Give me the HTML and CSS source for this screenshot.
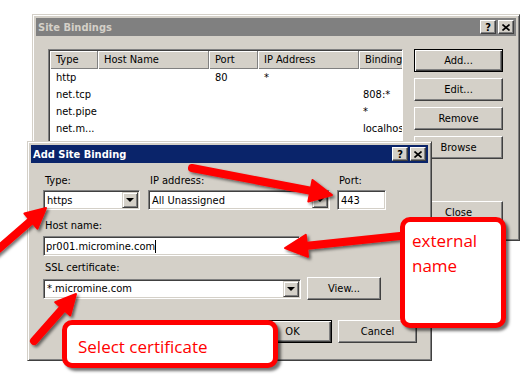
FILE: index.html
```html
<!DOCTYPE html>
<html lang="en">
<head>
    <meta charset="UTF-8">
    <link rel="stylesheet" href="styles.css">
</head>
<body>

<div class="desk">

    <!-- back window -->
    <div class="win win-sites">
        <div class="title title-off">
            <span>Site Bindings</span>
            <div class="caps">
                <span class="cap">?</span>
                <span class="cap"><svg width="8" height="7" viewBox="0 0 8 7"><path d="M0.5 0.5l7 6M7.5 0.5l-7 6" stroke="#000" stroke-width="1.6"/></svg></span>
            </div>
        </div>
        <div class="sites-body">
            <div class="list">
                <div class="lgrid">
                    <div class="hcell">Type</div>
                    <div class="hcell">Host Name</div>
                    <div class="hcell">Port</div>
                    <div class="hcell">IP Address</div>
                    <div class="hcell">Binding</div>

                    <div class="cell">http</div><div class="cell"></div><div class="cell">80</div><div class="cell">*</div><div class="cell cell-b"></div>
                    <div class="cell">net.tcp</div><div class="cell"></div><div class="cell"></div><div class="cell"></div><div class="cell cell-b">808:*</div>
                    <div class="cell">net.pipe</div><div class="cell"></div><div class="cell"></div><div class="cell"></div><div class="cell cell-b">*</div>
                    <div class="cell">net.m...</div><div class="cell"></div><div class="cell"></div><div class="cell"></div><div class="cell cell-b">localhost</div>
                    <div class="cell"></div><div class="cell"></div><div class="cell"></div><div class="cell"></div><div class="cell cell-b">localhost</div>
                </div>
            </div>
            <div class="side">
                <div class="btn btn-def">Add...</div>
                <div class="btn">Edit...</div>
                <div class="btn">Remove</div>
                <div class="btn">Browse</div>
                <div class="btn btn-close">Close</div>
            </div>
        </div>
    </div>

    <!-- front dialog -->
    <div class="win win-add">
        <div class="title">
            <span>Add Site Binding</span>
            <div class="caps">
                <span class="cap">?</span>
                <span class="cap"><svg width="8" height="7" viewBox="0 0 8 7"><path d="M0.5 0.5l7 6M7.5 0.5l-7 6" stroke="#000" stroke-width="1.6"/></svg></span>
            </div>
        </div>
        <div class="form">
            <div class="row1">
                <div class="grp grp-type">
                    <div class="lbl">Type:</div>
                    <div class="field combo"><span class="val">https</span><span class="drop"></span></div>
                </div>
                <div class="grp grp-ip">
                    <div class="lbl">IP address:</div>
                    <div class="field combo"><span class="val">All Unassigned</span><span class="drop"></span></div>
                </div>
                <div class="grp grp-port">
                    <div class="lbl">Port:</div>
                    <div class="field"><span class="val">443</span></div>
                </div>
            </div>

            <div class="lbl lbl-host">Host name:</div>
            <div class="field field-host"><span class="val">pr001.micromine.com</span><span class="caret"></span></div>

            <div class="lbl lbl-ssl">SSL certificate:</div>
            <div class="row-ssl">
                <div class="field combo field-ssl"><span class="val">*.micromine.com</span><span class="drop"></span></div>
                <div class="btn btn-view">View...</div>
            </div>

            <div class="row-ok">
                <div class="btn btn-def btn-ok">OK</div>
                <div class="btn btn-ok">Cancel</div>
            </div>
        </div>
    </div>

    <!-- annotation arrows -->
    <svg class="marks" width="531" height="379" viewBox="0 0 531 379">
        <defs>
            <filter id="sh" x="-20%" y="-20%" width="140%" height="140%">
                <feDropShadow dx="2" dy="2" stdDeviation="1.4" flood-color="#000" flood-opacity="0.55"/>
            </filter>
        </defs>
        <g fill="#f00" stroke="#f00" stroke-linecap="round" stroke-linejoin="round" filter="url(#sh)">
            <line x1="192" y1="168" x2="312" y2="191" stroke-width="8"/>
            <polygon points="332,195 308.3,201.6 312.5,180" stroke-width="2"/>

            <line x1="-5" y1="252" x2="33" y2="219" stroke-width="8"/>
            <polygon points="46,208 37.4,228.7 24.4,213.5" stroke-width="2"/>

            <line x1="400" y1="236" x2="305" y2="246" stroke-width="8"/>
            <polygon points="285,248 305.8,234.9 308,256.7" stroke-width="2"/>

            <line x1="34" y1="341" x2="64" y2="307" stroke-width="8"/>
            <polygon points="76,294 70.2,315.6 55.2,302.2" stroke-width="2"/>
        </g>
    </svg>

    <div class="note note-ext">external<br>name</div>
    <div class="note note-ssl">Select certificate</div>

</div>

</body>
</html>
```

FILE: styles.css
```css
body {
    margin: 0;
    background-color: #fff;
    font-family: "DejaVu Sans Condensed", "DejaVu Sans", sans-serif;
    font-size: 11px;
    color: #000;
}

.desk {
    position: relative;
    width: 531px;
    height: 379px;
    overflow: hidden;
}

/* classic window frame */
.win {
    position: absolute;
    box-sizing: border-box;
    display: flex;
    flex-direction: column;
    padding: 3px;
    background-color: #d4d0c8;
    border: 1px solid;
    border-color: #d4d0c8 #404040 #404040 #d4d0c8;
    box-shadow: inset 1px 1px #fff, inset -1px -1px #808080;
}

.win-sites {
    left: 32px;
    top: 14px;
    width: 488px;
    height: 227px;
}

.win-add {
    left: 27px;
    top: 141px;
    width: 405px;
    height: 220px;
}

.title {
    height: 18px;
    flex-shrink: 0;
    display: flex;
    align-items: center;
    justify-content: space-between;
    padding: 0 2px 0 2px;
    font-weight: bold;
    color: #fff;
    background-color: #0a246a;
}

.title-off {
    background-color: #808080;
    color: #d4d0c8;
}

.caps {
    display: flex;
    gap: 2px;
}

.cap {
    box-sizing: border-box;
    width: 16px;
    height: 14px;
    display: flex;
    align-items: center;
    justify-content: center;
    font-size: 11px;
    font-weight: bold;
    color: #000;
    background-color: #d4d0c8;
    border: 1px solid;
    border-color: #fff #404040 #404040 #fff;
    box-shadow: inset -1px -1px #808080;
}

/* buttons and fields */
.btn {
    box-sizing: border-box;
    height: 23px;
    display: flex;
    align-items: center;
    justify-content: center;
    background-color: #d4d0c8;
    border: 1px solid;
    border-color: #fff #404040 #404040 #fff;
    box-shadow: inset -1px -1px #808080, inset 1px 1px #d4d0c8;
}

.btn-def {
    border-color: #000;
    box-shadow: inset 1px 1px #fff, inset -1px -1px #404040, inset -2px -2px #808080;
}

.field {
    box-sizing: border-box;
    height: 20px;
    display: flex;
    align-items: center;
    padding: 0 2px 0 3px;
    background-color: #fff;
    border: 1px solid;
    border-color: #808080 #fff #fff #808080;
    box-shadow: inset 1px 1px #404040, inset -1px -1px #d4d0c8;
}

.combo {
    padding: 1px 1px 1px 2px;
    align-items: stretch;
}

.combo .val {
    flex: 1;
    display: flex;
    align-items: center;
    padding-left: 1px;
}

.drop {
    box-sizing: border-box;
    width: 16px;
    position: relative;
    background-color: #d4d0c8;
    border: 1px solid;
    border-color: #d4d0c8 #404040 #404040 #d4d0c8;
    box-shadow: inset 1px 1px #fff, inset -1px -1px #808080;
}

.drop::after {
    content: "";
    position: absolute;
    left: 3px;
    top: 5px;
    border-left: 4px solid transparent;
    border-right: 4px solid transparent;
    border-top: 4px solid #000;
}

.caret {
    width: 0;
    height: 13px;
    border-left: 1px solid #000;
}

/* site bindings */
.sites-body {
    flex: 1;
    display: flex;
    gap: 11px;
    padding: 13px 0 0 12px;
}

.list {
    box-sizing: border-box;
    width: 355px;
    height: 185px;
    overflow: hidden;
    background-color: #fff;
    border: 1px solid;
    border-color: #808080 #fff #fff #808080;
    box-shadow: inset 1px 1px #404040;
    padding: 1px 0 0 1px;
}

.lgrid {
    display: grid;
    grid-template-columns: 48px 111px 49px 101px 60px;
    grid-auto-rows: 17px;
}

.hcell {
    box-sizing: border-box;
    height: 18px;
    padding: 2px 0 0 6px;
    white-space: nowrap;
    background-color: #d4d0c8;
    border-right: 1px solid #808080;
    box-shadow: inset 1px 1px #fff, inset 0 -1px #808080;
}

.cell {
    padding: 3px 0 0 6px;
    white-space: nowrap;
}

.cell-b {
    padding-left: 4px;
}

.side {
    width: 89px;
    display: flex;
    flex-direction: column;
    gap: 6px;
}

.btn-close {
    margin-top: 36px;
}

/* add site binding */
.form {
    flex: 1;
    display: flex;
    flex-direction: column;
    padding: 11px 11px 0 12px;
}

.lbl {
    height: 13px;
    line-height: 13px;
    margin: 0 0 3px 2px;
}

.row1 {
    display: flex;
}

.grp-type {
    width: 97px;
}

.grp-ip {
    width: 182px;
    margin-left: 8px;
}

.grp-port {
    width: 49px;
    margin-left: 7px;
}

.lbl-host {
    margin-top: 9px;
    margin-bottom: 4px;
}

.field-host {
    width: 257px;
    padding-left: 2px;
}

.lbl-ssl {
    margin-top: 5px;
    margin-bottom: 3px;
}

.row-ssl {
    display: flex;
    align-items: center;
    gap: 6px;
}

.field-ssl {
    width: 258px;
}

.btn-view {
    width: 74px;
}

.row-ok {
    display: flex;
    justify-content: flex-end;
    gap: 6px;
    margin-top: 20px;
}

.btn-ok {
    width: 79px;
}

/* annotations */
.marks {
    position: absolute;
    left: 0;
    top: 0;
}

.note {
    position: absolute;
    box-sizing: border-box;
    background-color: #fff;
    border: 5px solid #f00;
    border-radius: 10px;
    box-shadow: 3px 3px 3px rgba(0, 0, 0, 0.55);
    font-family: "Open Sans", sans-serif;
    font-size: 17px;
    line-height: 25px;
    color: #f00;
}

.note-ext {
    left: 400px;
    top: 217px;
    width: 106px;
    height: 111px;
    padding: 6px 0 0 7px;
}

.note-ssl {
    left: 62px;
    top: 320px;
    width: 216px;
    height: 48px;
    padding: 9px 0 0 11px;
}
```
